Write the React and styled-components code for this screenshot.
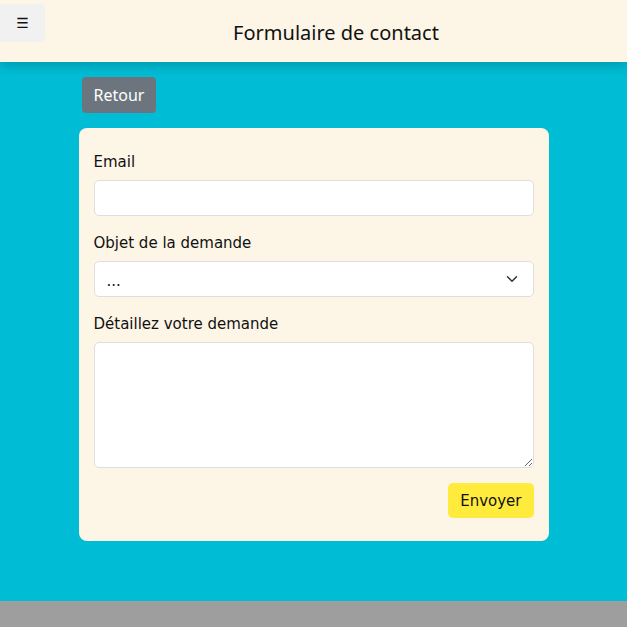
import * as React from "react";
import styled, { createGlobalStyle } from "styled-components";

const Global = createGlobalStyle`
  html, body { margin: 0; padding: 0; }
  body {
    background: #00bcd4;
    font-family: "DejaVu Sans", Verdana, sans-serif;
    color: #111;
  }
  * { box-sizing: border-box; }
`;

const Page = styled.div`
  min-height: 627px;
  display: flex;
  flex-direction: column;
`;

const Header = styled.header`
  height: 62px;
  background: #fdf5e6;
  display: flex;
  align-items: flex-start;
  box-shadow: 0 4px 10px rgba(0, 0, 0, 0.18);
  position: relative;
  z-index: 1;
`;

const MenuButton = styled.button`
  margin-top: 4px;
  width: 45px;
  height: 38px;
  border: none;
  border-radius: 0 5px 5px 0;
  background: #f1f1f1;
  font-size: 14px;
  color: #111;
  font-family: "DejaVu Sans", sans-serif;
`;

const Title = styled.h1`
  flex: 1;
  margin: 0;
  line-height: 66px;
  text-align: center;
  font-family: "Noto Sans", "Open Sans", sans-serif;
  font-weight: 400;
  font-size: 20px;
  color: #111;
`;

const Main = styled.main`
  flex: 1;
  width: 470px;
  margin: 0 auto;
  padding: 15px 0 60px;
`;

const BackButton = styled.button`
  margin-left: 3px;
  height: 36px;
  padding: 0 12px;
  border: none;
  border-radius: 4px;
  background: #6c757d;
  color: #fff;
  font-family: "Noto Sans", "Open Sans", sans-serif;
  font-size: 16px;
`;

const Card = styled.form`
  margin-top: 15px;
  background: #fdf5e6;
  border-radius: 8px;
  padding: 20px 15px 23px;
  display: flex;
  flex-direction: column;
`;

const Label = styled.label`
  font-size: 15px;
  line-height: 24px;
  margin: ${(p) => (p.$first ? "2px" : "15px")} 0 6px;
`;

const fieldBase = `
  width: 100%;
  background: #fff;
  border: 1px solid #dedede;
  border-radius: 5px;
  font-family: "DejaVu Sans", sans-serif;
  font-size: 15px;
  color: #111;
  outline: none;
`;

const Input = styled.input`
  ${fieldBase}
  height: 36px;
  padding: 0 12px;
`;

const Select = styled.select`
  ${fieldBase}
  height: 36px;
  padding: 4px 12px 0;
  appearance: none;
  background: #fff url("data:image/svg+xml;utf8,<svg xmlns='http://www.w3.org/2000/svg' width='12' height='12' viewBox='0 0 16 16'><path d='M2 5l6 6 6-6' fill='none' stroke='%23333' stroke-width='2' stroke-linecap='round' stroke-linejoin='round'/></svg>") no-repeat right 15px center;
`;

const TextArea = styled.textarea`
  ${fieldBase}
  height: 126px;
  padding: 8px 12px;
  resize: vertical;
  display: block;
`;

const Actions = styled.div`
  display: flex;
  justify-content: flex-end;
  margin-top: 15px;
`;

const SubmitButton = styled.button`
  height: 35px;
  padding: 0 12px;
  border: none;
  border-radius: 5px;
  background: #ffeb3b;
  color: #111;
  font-family: "DejaVu Sans", sans-serif;
  font-size: 15px;
`;

const Footer = styled.footer`
  height: 26px;
  background: #9e9e9e;
`;

export default function App() {
  return (
    <Page>
      <Global />
      <Header>
        <MenuButton type="button">☰</MenuButton>
        <Title>Formulaire de contact</Title>
      </Header>
      <Main>
        <BackButton type="button">Retour</BackButton>
        <Card onSubmit={(e) => e.preventDefault()}>
          <Label $first htmlFor="email">Email</Label>
          <Input id="email" type="email" />
          <Label htmlFor="objet">Objet de la demande</Label>
          <Select id="objet" defaultValue="">
            <option value="">...</option>
          </Select>
          <Label htmlFor="details">Détaillez votre demande</Label>
          <TextArea id="details" />
          <Actions>
            <SubmitButton type="submit">Envoyer</SubmitButton>
          </Actions>
        </Card>
      </Main>
      <Footer />
    </Page>
  );
}
